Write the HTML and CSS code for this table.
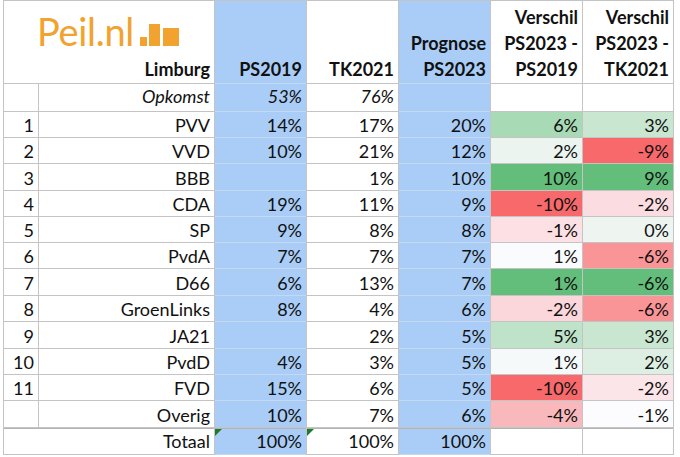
FILE: index.html
```html
<!DOCTYPE html>
<html lang="nl">
<head>
<meta charset="utf-8">
<title>Peil.nl Limburg</title>
<link rel="stylesheet" href="styles.css">
</head>
<body>
<div class="sheet">
  <div class="row head">
    <div class="cell logo-cell span2">
      <div class="logo">Peil.nl<svg class="bars" width="40" height="22" viewBox="0 0 40 22"><rect x="0" y="13" width="7" height="9" fill="#f2a22e"/><rect x="9" y="0" width="11" height="22" fill="#f2a22e"/><rect x="23" y="4" width="16" height="18" fill="#f2a22e"/></svg></div>
      <div class="hd">Limburg</div>
    </div>
    <div class="cell blue"><span class="hd">PS2019</span></div>
    <div class="cell"><span class="hd">TK2021</span></div>
    <div class="cell blue"><span class="hd">Prognose<br>PS2023</span></div>
    <div class="cell"><span class="hd">Verschil<br>PS2023 -<br>PS2019</span></div>
    <div class="cell"><span class="hd">Verschil<br>PS2023 -<br>TK2021</span></div>
  </div>
  <div class="row opk">
    <div class="cell"></div>
    <div class="cell it">Opkomst</div>
    <div class="cell blue it">53%</div>
    <div class="cell it">76%</div>
    <div class="cell blue"></div>
    <div class="cell"></div>
    <div class="cell"></div>
  </div>
  <div class="row"><div class="cell">1</div><div class="cell">PVV</div><div class="cell blue">14%</div><div class="cell">17%</div><div class="cell blue">20%</div><div class="cell h-g6">6%</div><div class="cell h-g3">3%</div></div>
  <div class="row"><div class="cell">2</div><div class="cell">VVD</div><div class="cell blue">10%</div><div class="cell">21%</div><div class="cell blue">12%</div><div class="cell h-g2">2%</div><div class="cell h-rmax">-9%</div></div>
  <div class="row"><div class="cell">3</div><div class="cell">BBB</div><div class="cell blue"></div><div class="cell">1%</div><div class="cell blue">10%</div><div class="cell h-gmax">10%</div><div class="cell h-gmax">9%</div></div>
  <div class="row"><div class="cell">4</div><div class="cell">CDA</div><div class="cell blue">19%</div><div class="cell">11%</div><div class="cell blue">9%</div><div class="cell h-rmax">-10%</div><div class="cell h-r2">-2%</div></div>
  <div class="row"><div class="cell">5</div><div class="cell">SP</div><div class="cell blue">9%</div><div class="cell">8%</div><div class="cell blue">8%</div><div class="cell h-r1">-1%</div><div class="cell h-g0">0%</div></div>
  <div class="row"><div class="cell">6</div><div class="cell">PvdA</div><div class="cell blue">7%</div><div class="cell">7%</div><div class="cell blue">7%</div><div class="cell h-w">1%</div><div class="cell h-r6">-6%</div></div>
  <div class="row"><div class="cell">7</div><div class="cell">D66</div><div class="cell blue">6%</div><div class="cell">13%</div><div class="cell blue">7%</div><div class="cell h-gmax">1%</div><div class="cell h-gmax">-6%</div></div>
  <div class="row"><div class="cell">8</div><div class="cell">GroenLinks</div><div class="cell blue">8%</div><div class="cell">4%</div><div class="cell blue">6%</div><div class="cell h-r2b">-2%</div><div class="cell h-r6">-6%</div></div>
  <div class="row"><div class="cell">9</div><div class="cell">JA21</div><div class="cell blue"></div><div class="cell">2%</div><div class="cell blue">5%</div><div class="cell h-g5">5%</div><div class="cell h-g3">3%</div></div>
  <div class="row"><div class="cell">10</div><div class="cell">PvdD</div><div class="cell blue">4%</div><div class="cell">3%</div><div class="cell blue">5%</div><div class="cell h-w2">1%</div><div class="cell h-g2b">2%</div></div>
  <div class="row"><div class="cell">11</div><div class="cell">FVD</div><div class="cell blue">15%</div><div class="cell">6%</div><div class="cell blue">5%</div><div class="cell h-rmax">-10%</div><div class="cell h-r2c">-2%</div></div>
  <div class="row"><div class="cell"></div><div class="cell">Overig</div><div class="cell blue last">10%</div><div class="cell">7%</div><div class="cell blue last">6%</div><div class="cell h-r4">-4%</div><div class="cell h-w3">-1%</div></div>
  <div class="row total">
    <div class="cell span2">Totaal</div>
    <div class="cell blue flag">100%</div>
    <div class="cell flag">100%</div>
    <div class="cell blue">100%</div>
    <div class="cell"></div>
    <div class="cell"></div>
  </div>
</div>
</body>
</html>
```

FILE: styles.css
```css
html, body {
  margin: 0;
  background: #ffffff;
}

body {
  font-family: Lato, "Liberation Sans", sans-serif;
  color: #111111;
}

.sheet {
  display: grid;
  grid-template-columns: 34px 175px 91px 91px 91px 91px 90px;
  grid-template-rows: 82px 27px 25px 25px 26px 25px 25px 25px 26px 25px 26px 25px 25px 26px 26px;
  gap: 1px;
  padding: 1px;
  width: max-content;
  margin-left: 3px;
  background: #c4c4c4;
}

.row {
  display: contents;
}

.cell {
  position: relative;
  display: flex;
  align-items: flex-end;
  justify-content: flex-end;
  padding: 0 4px 1px 0;
  background: #ffffff;
  font-size: 18px;
  line-height: 22px;
  white-space: nowrap;
}

.span2 {
  grid-column: span 2;
}

.blue {
  background: #a9cdf7;
  box-shadow: 0 1px 0 #c6d8ee;
}

.blue.last {
  box-shadow: none;
}

.head .cell {
  padding-bottom: 1px;
}

.hd {
  display: block;
  text-align: right;
  font-weight: 700;
  line-height: 26px;
}

.logo-cell {
  flex-direction: column;
  align-items: stretch;
  justify-content: space-between;
}

.logo {
  margin-top: 11px;
  padding-left: 33px;
  font-size: 38px;
  line-height: 38px;
  font-weight: 400;
  color: #f2a22e;
  letter-spacing: -0.3px;
}

.bars {
  margin-left: 6px;
  vertical-align: baseline;
}

.opk .cell {
  padding-bottom: 4px;
}

.it {
  font-style: italic;
}

.total .cell {
  border-top: 1px solid #b4b4b4;
  padding-bottom: 2px;
}

.flag::before {
  content: "";
  position: absolute;
  left: 0;
  top: 0;
  border-top: 7px solid #1f7a2f;
  border-right: 7px solid transparent;
}

.h-gmax { background: #63be7b; }
.h-g6 { background: #a8dab5; }
.h-g5 { background: #bfe3c8; }
.h-g3 { background: #c8e6d0; }
.h-g2 { background: #ebf4ee; }
.h-g2b { background: #dcefe2; }
.h-g0 { background: #eef5f1; }
.h-w { background: #fafbfc; }
.h-w2 { background: #f6f9f9; }
.h-w3 { background: #fcfcff; }
.h-r1 { background: #fce0e3; }
.h-r2 { background: #fbdde1; }
.h-r2b { background: #fbd6da; }
.h-r2c { background: #fce5e8; }
.h-r4 { background: #f9b9bc; }
.h-r6 { background: #f99597; }
.h-rmax { background: #f8696b; }
```
